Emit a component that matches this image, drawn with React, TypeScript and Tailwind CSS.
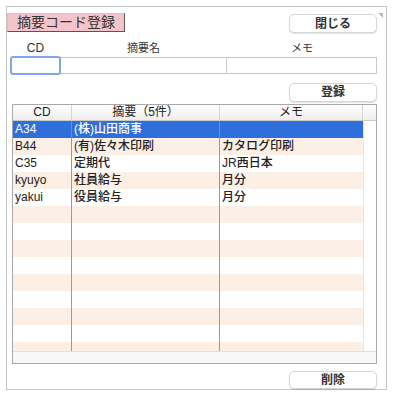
import clsx from 'clsx';

interface Row {
  cd: string;
  summary: string;
  memo: string;
}

const rows: Row[] = [
  { cd: 'A34', summary: '(株)山田商事', memo: '' },
  { cd: 'B44', summary: '(有)佐々木印刷', memo: 'カタログ印刷' },
  { cd: 'C35', summary: '定期代', memo: 'JR西日本' },
  { cd: 'kyuyo', summary: '社員給与', memo: '月分' },
  { cd: 'yakui', summary: '役員給与', memo: '月分' },
];

const FONT = "font-['Liberation_Sans','Noto_Sans_CJK_JP',sans-serif]";

function MacButton({ label, className }: { label: string; className?: string }) {
  return (
    <button
      className={clsx(
        'flex h-[19px] w-[88px] items-center justify-center rounded-[5px] border border-[#d6d6d6] bg-white',
        'text-[12px] font-semibold leading-none text-[#333] shadow-[0_1px_1px_rgba(0,0,0,0.12)]',
        className
      )}
    >
      {label}
    </button>
  );
}

export default function App() {
  // 14 行分描画して、はみ出した分は切る
  const bodyRows: (Row | null)[] = [...rows, ...Array(9).fill(null)];

  return (
    <div className={clsx('h-[396px] w-[404px] bg-white pl-[6px] pt-[6px]', FONT)}>
      {/* ウィンドウ枠 */}
      <div className="relative flex h-[384px] w-[381px] flex-col border border-[#c4c4c4]">
        <div className="absolute right-[3px] top-[6px] h-0 w-0 border-l-[5px] border-t-[5px] border-l-transparent border-t-[#b8b8b8]" />

        {/* タイトル + 閉じる */}
        <div className="flex items-start pt-[6px]">
          <div className="flex h-[19px] w-[118px] items-center justify-center border-b border-r border-[#555] border-l border-t border-l-[#e9b7bd] border-t-[#e9b7bd] bg-[#f5c4ca] text-[14px] text-[#333]">
            摘要コード登録
          </div>
          <MacButton label="閉じる" className="ml-auto mr-[9px] mt-[1px] h-[18px]" />
        </div>

        {/* 入力欄 */}
        <div className="ml-[4px] mt-[8px] grid grid-cols-[49px_167px_150px]">
          <div className="h-[14px] text-center text-[12px] leading-[14px] text-[#333]">CD</div>
          <div className="h-[14px] text-center text-[11px] leading-[14px] text-[#333]">摘要名</div>
          <div className="h-[14px] text-center text-[11px] leading-[14px] text-[#333]">メモ</div>
          <div className="relative mt-[2px] h-[17px]">
            <div className="absolute -inset-[1px] rounded-[3px] border-2 border-[#7ea8ea] bg-white" />
          </div>
          <div className="mt-[2px] h-[17px] border-y border-r border-[#c8c8c8] bg-white" />
          <div className="mt-[2px] h-[17px] border-y border-r border-[#c8c8c8] bg-white" />
        </div>

        <MacButton label="登録" className="mr-[9px] mt-[9px] self-end" />

        {/* 一覧 */}
        <div className="ml-[5px] mt-[2px] flex h-[260px] w-[365px] flex-col border border-[#a9a9a9] text-[12px] text-[#222]">
          {/* ヘッダー */}
          <div className="flex h-[16px] border-b border-[#c9c9c9] bg-gradient-to-b from-white to-[#eeeeee] leading-[15px]">
            <div className="w-[59px] border-r border-[#d6d6d6] text-center">CD</div>
            <div className="w-[148px] border-r border-[#d6d6d6] text-center">摘要（5件）</div>
            <div className="w-[143px] border-r border-[#d6d6d6] text-center">メモ</div>
            <div className="flex-1" />
          </div>

          {/* 本体 */}
          <div className="flex h-[230px] overflow-hidden">
            <div className="w-[350px]">
              {bodyRows.map((row, i) => {
                const selected = i === 0;
                return (
                  <div
                    key={i}
                    className={clsx(
                      'flex h-[17px] leading-[17px]',
                      selected ? 'bg-[#2f6fdc] text-white' : i % 2 === 1 ? 'bg-[#fcefe5]' : 'bg-white'
                    )}
                  >
                    <div className={clsx('w-[59px] border-r pl-[2px]', selected ? 'border-[#5d8fe4]' : 'border-[#9a9a9a]')}>
                      {row?.cd}
                    </div>
                    <div className={clsx('w-[148px] border-r pl-[2px] font-medium', selected ? 'border-[#5d8fe4]' : 'border-[#9a9a9a]')}>
                      {row?.summary}
                    </div>
                    <div className="w-[143px] pl-[2px] font-medium">{row?.memo}</div>
                  </div>
                );
              })}
            </div>
            <div className="flex-1 border-l border-[#e6e6e6] bg-white" />
          </div>

          {/* 横スクロール領域 */}
          <div className="h-[12px] border-t border-[#dedede] bg-[#f8f8f8]" />
        </div>

        <MacButton label="削除" className="mr-[9px] mt-[7px] h-[18px] self-end" />
      </div>
    </div>
  );
}
